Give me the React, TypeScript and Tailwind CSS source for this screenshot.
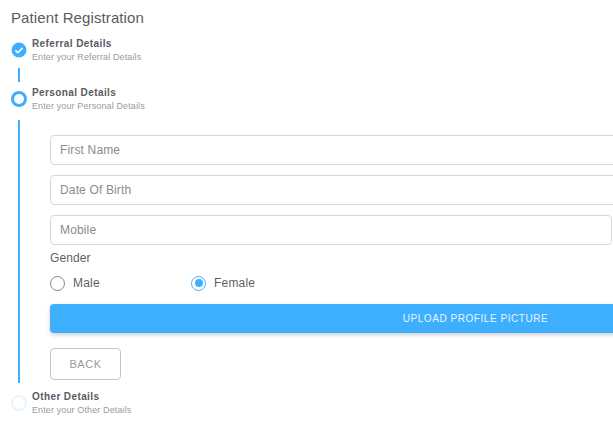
const font = { fontFamily: '"Liberation Sans", Arial, sans-serif' }

function CheckDot() {
  return (
    <svg width="16" height="16" viewBox="0 0 16 16" className="shrink-0">
      <circle cx="8" cy="8" r="7.5" fill="#3eafff" />
      <path d="M4.4 8.3l2.5 2.4 4.6-4.8" fill="none" stroke="#fff" strokeWidth="1.6" />
    </svg>
  )
}

function RingDot({ faded }: { faded?: boolean }) {
  return (
    <div className={`w-[16px] h-[16px] rounded-full shrink-0 ${faded ? 'border-2 border-[#e6f4ff]' : 'border-[3px] border-[#3eafff]'}`} />
  )
}

function StepHead({ title, sub, icon, className }: { title: string; sub: string; icon: React.ReactNode; className?: string }) {
  return (
    <div className={`flex items-center gap-[5px] pl-[11px] ${className ?? ''}`}>
      {icon}
      <div className="flex flex-col">
        <span className="text-[10px] leading-[16px] font-bold tracking-[0.4px] text-[#5a5a64]">{title}</span>
        <span className="-mt-px pb-px text-[9px] leading-[12px] tracking-[0.12px] text-[#9a9a9f]">{sub}</span>
      </div>
    </div>
  )
}

function Field({ label, className }: { label: string; className: string }) {
  return (
    <div className={`h-[30px] shrink-0 border border-[#d8d8d8] rounded-[4px] flex items-center pl-[9px] text-[12px] tracking-[0.15px] text-[#8b8b8b] ${className}`}>
      {label}
    </div>
  )
}

export default function App() {
  return (
    <div style={font} className="w-[613px] h-[421px] overflow-hidden bg-white flex flex-col">
      <h1 className="pl-[11px] pt-[9px] text-[15px] leading-[18px] tracking-[0.1px] font-normal text-[#5a5a5f]">Patient Registration</h1>
      <div className="mt-[9px]">
        <StepHead title="Referral Details" sub="Enter your Referral Details" icon={<CheckDot />} />
      </div>
      <div className="ml-[18px] mt-[4px] w-[2px] h-[14px] bg-[#3eafff]" />
      <StepHead className="mt-[3px]" title="Personal Details" sub="Enter your Personal Details" icon={<RingDot />} />
      <div className="ml-[18px] mt-[7px] w-[900px] h-[263px] border-l-2 border-[#3eafff] pl-[30px] pt-[15px] flex flex-col">
        <Field label="First Name" className="w-[851px]" />
        <Field label="Date Of Birth" className="w-[851px] mt-[10px]" />
        <Field label="Mobile" className="w-[562px] mt-[10px]" />
        <div className="mt-[6px] text-[12px] leading-[14px] tracking-[0.1px] text-[#5f5f64]">Gender</div>
        <div className="mt-[9px] flex items-center text-[12px] tracking-[0.2px] text-[#5f5f64]">
          <div className="w-[141px] flex items-center gap-[8px]">
            <div className="w-[15px] h-[15px] rounded-full border-[1.5px] border-[#858585]" />
            <span>Male</span>
          </div>
          <div className="flex items-center gap-[8px]">
            <div className="w-[15px] h-[15px] rounded-full border-[1.5px] border-[#3eafff] flex items-center justify-center">
              <div className="w-[8px] h-[8px] rounded-full bg-[#3eafff]" />
            </div>
            <span>Female</span>
          </div>
        </div>
        <div className="mt-[12px] w-[851px] h-[29px] shrink-0 rounded-[4px] bg-[#3eafff] shadow-[0_2px_4px_rgba(0,0,0,0.18)] flex items-center justify-center text-[10px] tracking-[0.55px] text-[#e6f5ff]">
          UPLOAD PROFILE PICTURE
        </div>
        <div className="mt-[15px] w-[71px] h-[32px] shrink-0 rounded-[4px] border border-[#c4c4c4] flex items-center justify-center text-[11px] tracking-[0.5px] text-[#9a9a9a]">
          BACK
        </div>
      </div>
      <StepHead className="mt-[6px]" title="Other Details" sub="Enter your Other Details" icon={<RingDot faded />} />
    </div>
  )
}
